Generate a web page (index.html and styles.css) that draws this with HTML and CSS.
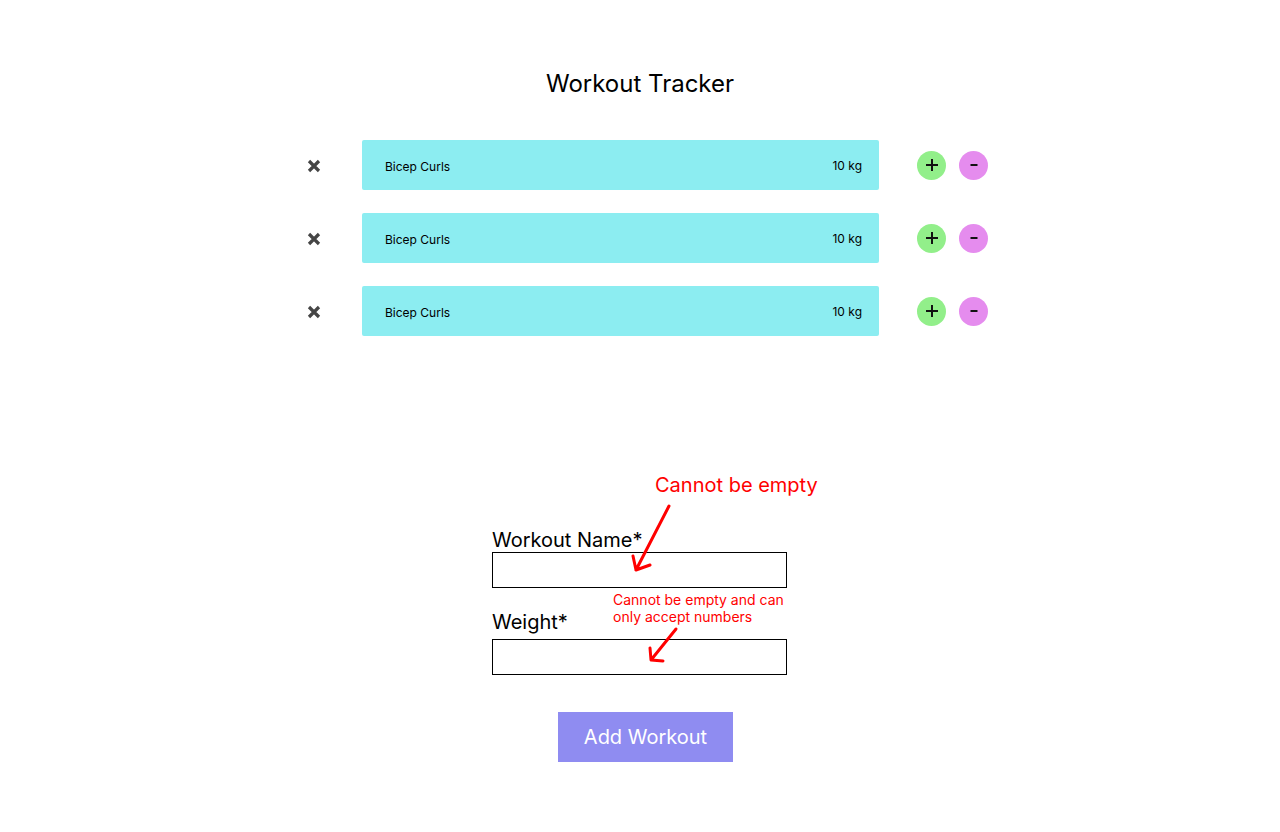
FILE: index.html
```html
<!DOCTYPE html>
<html lang="en">
<head>
<meta charset="utf-8">
<title>Workout Tracker</title>
<link rel="stylesheet" href="styles.css">
</head>
<body>
<main class="page">
  <h1 class="title">Workout Tracker</h1>

  <section class="list">
    <div class="row">
      <button class="del" aria-label="Delete"><svg viewBox="0 0 14 14" width="14" height="14"><path d="M2 2 L12 12 M12 2 L2 12" stroke="#454545" stroke-width="3.2"/></svg></button>
      <div class="card"><span class="name">Bicep Curls</span><span class="kg">10 kg</span></div>
      <button class="circ plus" aria-label="Increase"><svg viewBox="0 0 14 14" width="14" height="14"><path d="M7 1 V13 M1 7 H13" stroke="#111" stroke-width="2"/></svg></button>
      <button class="circ minus" aria-label="Decrease"><svg viewBox="0 0 14 14" width="14" height="14"><path d="M3.5 7 H10.5" stroke="#111" stroke-width="2"/></svg></button>
    </div>
    <div class="row">
      <button class="del" aria-label="Delete"><svg viewBox="0 0 14 14" width="14" height="14"><path d="M2 2 L12 12 M12 2 L2 12" stroke="#454545" stroke-width="3.2"/></svg></button>
      <div class="card"><span class="name">Bicep Curls</span><span class="kg">10 kg</span></div>
      <button class="circ plus" aria-label="Increase"><svg viewBox="0 0 14 14" width="14" height="14"><path d="M7 1 V13 M1 7 H13" stroke="#111" stroke-width="2"/></svg></button>
      <button class="circ minus" aria-label="Decrease"><svg viewBox="0 0 14 14" width="14" height="14"><path d="M3.5 7 H10.5" stroke="#111" stroke-width="2"/></svg></button>
    </div>
    <div class="row">
      <button class="del" aria-label="Delete"><svg viewBox="0 0 14 14" width="14" height="14"><path d="M2 2 L12 12 M12 2 L2 12" stroke="#454545" stroke-width="3.2"/></svg></button>
      <div class="card"><span class="name">Bicep Curls</span><span class="kg">10 kg</span></div>
      <button class="circ plus" aria-label="Increase"><svg viewBox="0 0 14 14" width="14" height="14"><path d="M7 1 V13 M1 7 H13" stroke="#111" stroke-width="2"/></svg></button>
      <button class="circ minus" aria-label="Decrease"><svg viewBox="0 0 14 14" width="14" height="14"><path d="M3.5 7 H10.5" stroke="#111" stroke-width="2"/></svg></button>
    </div>
  </section>

  <form class="form">
    <div class="note note-name">Cannot be empty</div>
    <svg class="arrow arrow-name" width="60" height="90" viewBox="0 0 60 90"><path d="M47 17 L14 81 M11 67 L14 81 L28 76" fill="none" stroke="#ff0000" stroke-width="3" stroke-linecap="round" stroke-linejoin="round"/></svg>
    <label class="label">Workout Name*</label>
    <input class="input" type="text">
    <div class="note note-weight">Cannot be empty and can<br>only accept numbers</div>
    <svg class="arrow arrow-weight" width="50" height="50" viewBox="0 0 50 50"><path d="M34 10 L9 41 M8 29 L9 41 L21 42" fill="none" stroke="#ff0000" stroke-width="3" stroke-linecap="round" stroke-linejoin="round"/></svg>
    <label class="label label-weight">Weight*</label>
    <input class="input" type="text">
    <button type="button" class="add">Add Workout</button>
  </form>
</main>
</body>
</html>
```

FILE: styles.css
```css
* { box-sizing: border-box; }
html, body { margin: 0; padding: 0; background: #ffffff; }
body {
  font-family: Inter, "Noto Sans", sans-serif;
  color: #000;
  width: 1280px;
  height: 832px;
  overflow: hidden;
}
.page { display: flex; flex-direction: column; }
.title {
  margin: 69px 0 0;
  font-size: 24px;
  font-weight: 400;
  line-height: 30px;
  text-align: center;
}
.list {
  margin-top: 41px;
  margin-left: 300px;
  display: flex;
  flex-direction: column;
  gap: 23px;
}
.row {
  display: flex;
  align-items: center;
  height: 50px;
}
button { font-family: inherit; border: 0; padding: 0; cursor: pointer; }
.del {
  width: 28px;
  height: 28px;
  margin-top: 2px;
  background: transparent;
  display: flex;
  align-items: center;
  justify-content: center;
}
.card {
  margin-left: 34px;
  width: 517px;
  height: 50px;
  background: #8cedf1;
  border-radius: 2px;
  display: flex;
  align-items: center;
  justify-content: space-between;
  padding: 0 17px 0 23px;
  font-size: 12px;
}
.name { padding-top: 2px; }
.circ {
  width: 29px;
  height: 29px;
  border-radius: 50%;
  display: flex;
  align-items: center;
  justify-content: center;
}
.plus { margin-left: 38px; background: #92ef8a; }
.minus { margin-left: 13px; background: #e58cee; }

.form {
  position: relative;
  margin: 193px 0 0 492px;
  width: 295px;
  display: flex;
  flex-direction: column;
}
.label {
  font-size: 20px;
  line-height: 23px;
  height: 23px;
}
.input {
  width: 295px;
  height: 36px;
  border: 1px solid #000;
  border-radius: 0;
  background: #fff;
  outline: none;
}
.label-weight { margin-top: 23px; margin-bottom: 5px; }
.add {
  margin: 37px 0 0 66px;
  width: 175px;
  height: 50px;
  background: #8f8cf1;
  color: #fff;
  font-size: 20px;
}
.note {
  position: absolute;
  color: #ff0000;
  white-space: nowrap;
}
.note-name {
  left: 163px;
  top: -56px;
  font-size: 20px;
  line-height: 24px;
}
.note-weight {
  left: 121px;
  top: 62px;
  font-size: 14px;
  line-height: 17px;
}
.arrow { position: absolute; }
.arrow-name { left: 130px; top: -40px; }
.arrow-weight { left: 150px; top: 90px; }
```
